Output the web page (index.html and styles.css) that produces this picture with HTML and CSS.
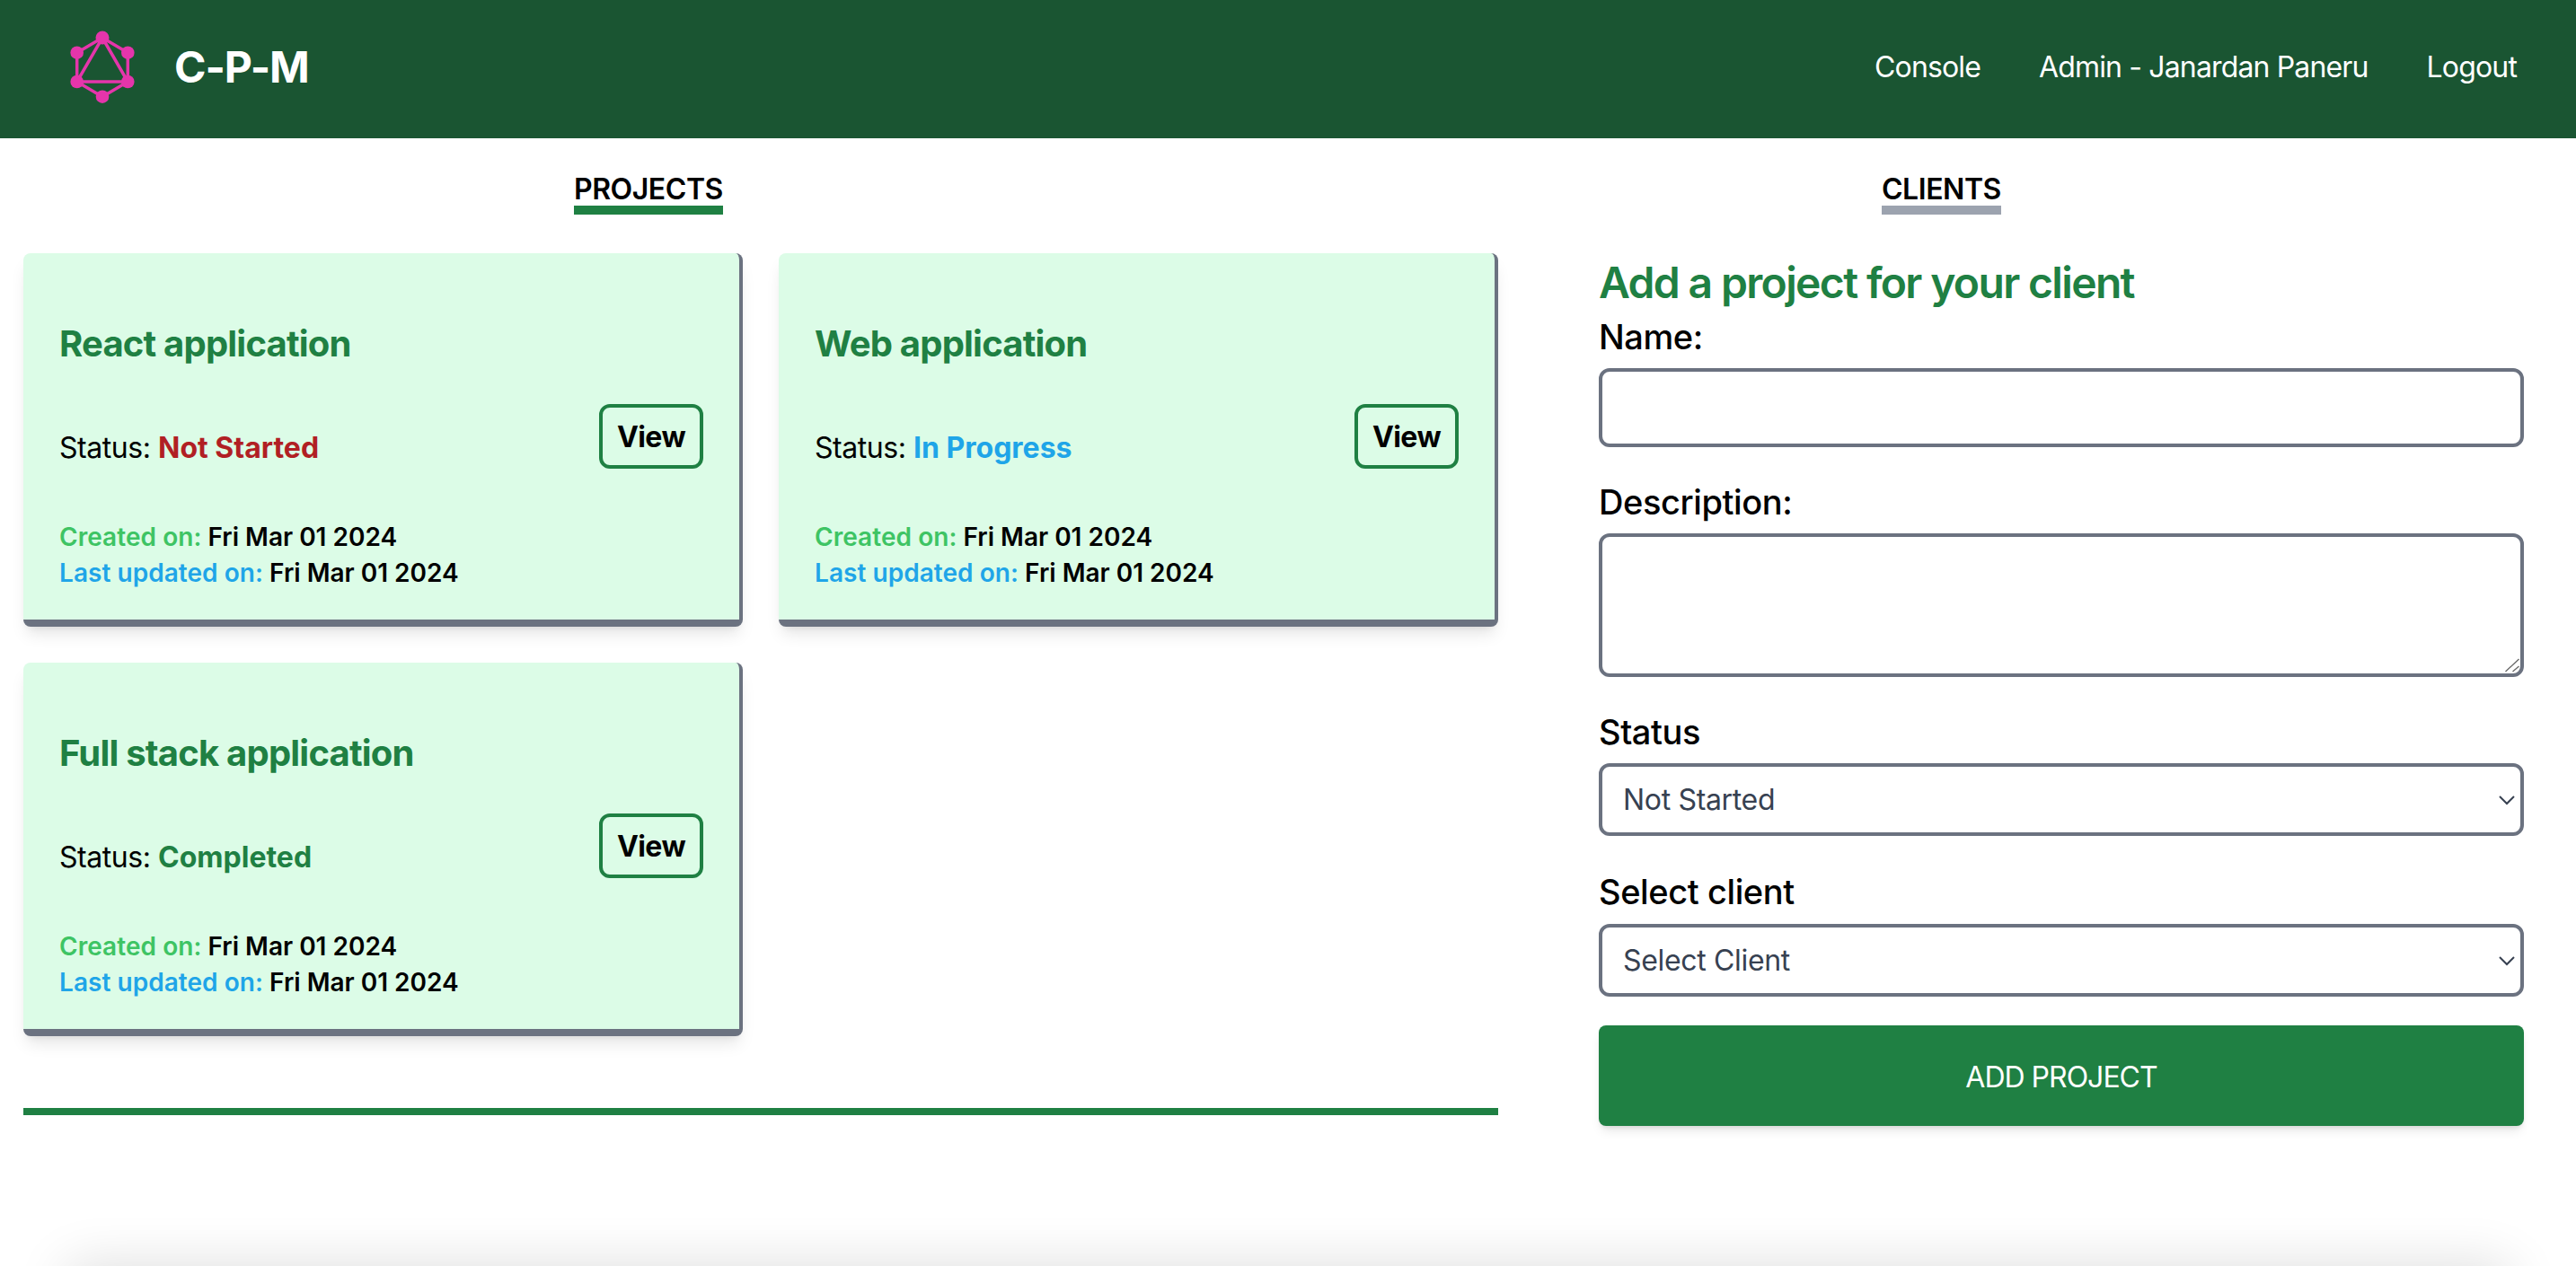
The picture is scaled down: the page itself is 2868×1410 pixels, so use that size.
FILE: index.html
```html
<!DOCTYPE html>
<html lang="en">
	<head>
		<meta charset="UTF-8">
		<title>C-P-M</title>
		<link rel="stylesheet" href="styles.css">
	</head>
	<body>

		<header class="topbar">
			<a class="brand" href="#">
				<svg class="brand-logo" viewBox="0 0 78 84" width="78" height="84">
					<g fill="none" stroke="#e535ab" stroke-width="3.5">
						<polygon points="39,9 67.3,25.7 67.3,58 39,74.7 10.7,58 10.7,25.7"></polygon>
						<polygon points="39,9 67.3,58 10.7,58"></polygon>
					</g>
					<g fill="#e535ab">
						<circle cx="39" cy="9" r="7.5"></circle>
						<circle cx="67.3" cy="25.7" r="7.3"></circle>
						<circle cx="67.3" cy="58" r="7.3"></circle>
						<circle cx="39" cy="74.7" r="7.3"></circle>
						<circle cx="10.7" cy="58" r="7.3"></circle>
						<circle cx="10.7" cy="25.7" r="7.3"></circle>
					</g>
				</svg>
				<span class="brand-name">C-P-M</span>
			</a>
			<nav class="topnav">
				<a href="#">Console</a>
				<a href="#">Admin - Janardan Paneru</a>
				<a href="#">Logout</a>
			</nav>
		</header>

		<div class="tabs">
			<button class="tab tab-active">PROJECTS</button>
			<button class="tab">CLIENTS</button>
		</div>

		<main class="content">
			<section>
				<div class="cards">
					<article class="card">
						<h2 class="card-title">React application</h2>
						<div class="card-row">
							<p>Status: <strong class="st-red">Not Started</strong></p>
							<a class="view-btn" href="#">View</a>
						</div>
						<div class="card-dates">
							<p><b class="lbl-created">Created on:</b> Fri Mar 01 2024</p>
							<p><b class="lbl-updated">Last updated on:</b> Fri Mar 01 2024</p>
						</div>
					</article>
					<article class="card">
						<h2 class="card-title">Web application</h2>
						<div class="card-row">
							<p>Status: <strong class="st-blue">In Progress</strong></p>
							<a class="view-btn" href="#">View</a>
						</div>
						<div class="card-dates">
							<p><b class="lbl-created">Created on:</b> Fri Mar 01 2024</p>
							<p><b class="lbl-updated">Last updated on:</b> Fri Mar 01 2024</p>
						</div>
					</article>
					<article class="card">
						<h2 class="card-title">Full stack application</h2>
						<div class="card-row">
							<p>Status: <strong class="st-green">Completed</strong></p>
							<a class="view-btn" href="#">View</a>
						</div>
						<div class="card-dates">
							<p><b class="lbl-created">Created on:</b> Fri Mar 01 2024</p>
							<p><b class="lbl-updated">Last updated on:</b> Fri Mar 01 2024</p>
						</div>
					</article>
				</div>
				<hr class="divider">
			</section>

			<form class="project-form">
				<h2 class="form-title">Add a project for your client</h2>
				<label class="field-label" for="name">Name:</label>
				<input class="field" id="name" type="text">

				<label class="field-label" for="desc">Description:</label>
				<div class="select-wrap">
					<textarea class="field field-area" id="desc"></textarea>
					<svg class="grip" viewBox="0 0 16 16" width="16" height="16">
						<path d="M.5 15L15.5 1M8.5 15l7-6" fill="none" stroke="#666" stroke-width="1.3"></path>
					</svg>
				</div>

				<label class="field-label" for="status">Status</label>
				<div class="select-wrap">
					<select class="field field-select" id="status">
						<option>Not Started</option>
						<option>In Progress</option>
						<option>Completed</option>
					</select>
					<svg class="chevron" viewBox="0 0 18 11" width="18" height="11">
						<path d="M1 1l8 8 8-8" fill="none" stroke="#374151" stroke-width="2"></path>
					</svg>
				</div>

				<label class="field-label label-client" for="client">Select client</label>
				<div class="select-wrap">
					<select class="field field-select" id="client">
						<option>Select Client</option>
					</select>
					<svg class="chevron" viewBox="0 0 18 11" width="18" height="11">
						<path d="M1 1l8 8 8-8" fill="none" stroke="#374151" stroke-width="2"></path>
					</svg>
				</div>

				<button class="submit-btn" type="button">ADD PROJECT</button>
			</form>
		</main>

		<footer class="page-foot"></footer>

	</body>
</html>
```

FILE: styles.css
```css
* {
	margin: 0;
	padding: 0;
	box-sizing: border-box;
}

html,
body {
	height: 100vh;
	overflow: hidden;
}

body {
	font-family: Inter, "Liberation Sans", sans-serif;
	font-size: 32px;
	color: #000;
	background: #fff;
}

a {
	color: inherit;
	text-decoration: none;
}

.topbar {
	height: 154px;
	padding: 0 66px 4px 75px;
	display: flex;
	align-items: center;
	justify-content: space-between;
	background: #1a5532;
	color: #fff;
}

.brand {
	display: flex;
	align-items: center;
	gap: 41px;
}

.brand-logo {
	display: block;
}

.brand-name {
	font-size: 48px;
	font-weight: 700;
	line-height: 60px;
	letter-spacing: -1.1px;
}

.topnav {
	display: flex;
	gap: 65px;
	line-height: 48px;
	letter-spacing: -.85px;
}

.tabs {
	height: 128px;
	padding: 36px 0 0 639px;
	display: flex;
	align-items: flex-start;
	gap: 1290px;
}

.tab {
	height: 49px;
	border: 0;
	border-bottom: 10px solid #9ca3af;
	background: none;
	font: 600 32px/41px Inter, sans-serif;
	letter-spacing: -.45px;
	color: #000;
}

.tab-active {
	border-bottom-color: #1f8043;
}

.content {
	height: 1128px;
	padding: 0 58px 0 26px;
	display: grid;
	grid-template-columns: 1642px 1fr;
	column-gap: 112px;
	align-items: start;
}

.cards {
	display: grid;
	grid-template-columns: repeat(2, 1fr);
	gap: 40px;
}

.card {
	height: 416px;
	padding: 73px 40px 32px;
	background: #dcfce7;
	border-right: 4px solid #6b7280;
	border-bottom: 8px solid #6b7280;
	border-radius: 8px;
	box-shadow: 0 12px 18px -4px rgba(0, 0, 0, .1), 0 6px 8px -6px rgba(0, 0, 0, .1);
}

.card-title {
	font-size: 40px;
	font-weight: 700;
	line-height: 56px;
	letter-spacing: -.8px;
	color: #1f8043;
}

.card-row {
	margin-top: 39px;
	display: flex;
	align-items: flex-end;
	justify-content: space-between;
}

.card-row p {
	line-height: 46px;
	letter-spacing: -.45px;
}

.card-row strong {
	font-weight: 700;
	letter-spacing: 0;
}

.st-red {
	color: #b11f24;
}

.st-blue {
	color: #1fa5e8;
}

.st-green {
	color: #1f8043;
}

.view-btn {
	width: 116px;
	height: 72px;
	border: 4px solid #1f8043;
	border-radius: 12px;
	font-weight: 700;
	line-height: 66px;
	letter-spacing: -.6px;
	text-align: center;
}

.card-dates {
	margin-top: 56px;
	font-size: 28px;
	font-weight: 600;
	line-height: 40px;
}

.card-dates b {
	font-weight: 600;
	letter-spacing: .05px;
}

.lbl-created {
	color: #3ec464;
}

.lbl-updated {
	color: #1fa5e8;
}

.divider {
	height: 8px;
	margin-top: 80px;
	border: 0;
	background: #1f8043;
}

.project-form {
	padding-top: 3px;
}

.form-title {
	font-size: 48px;
	font-weight: 600;
	line-height: 60px;
	letter-spacing: -1.65px;
	color: #1f8043;
}

.field-label {
	display: block;
	margin: 36px 0 10px;
	font-size: 38px;
	font-weight: 500;
	line-height: 50px;
	letter-spacing: -.4px;
}

.form-title + .field-label {
	margin-top: 5px;
}

.label-client {
	margin: 37px 0 11px;
}

.field {
	display: block;
	width: 100%;
	height: 88px;
	padding: 0 23px;
	border: 4px solid #6b7280;
	border-radius: 12px;
	background: #fff;
	font: 400 32px Inter, sans-serif;
	letter-spacing: -.33px;
	color: #374151;
	outline: none;
}

.field-area {
	height: 160px;
	resize: none;
}

.select-wrap {
	position: relative;
}

.field-select {
	height: 81px;
	appearance: none;
}

.chevron {
	position: absolute;
	right: 10px;
	top: 36px;
}

.grip {
	position: absolute;
	right: 5px;
	bottom: 5px;
}

.submit-btn {
	display: block;
	width: 100%;
	height: 112px;
	margin-top: 32px;
	padding-top: 2px;
	border: 0;
	border-radius: 8px;
	background: #1f8043;
	box-shadow: 0 8px 12px -3px rgba(0, 0, 0, .1), 0 3px 5px -2px rgba(0, 0, 0, .1);
	font: 400 32px Inter, sans-serif;
	letter-spacing: -1px;
	color: #fff;
}

.page-foot {
	height: 60px;
	margin: 0 75px;
	background: #fff;
	box-shadow: 0 0 60px rgba(0, 0, 0, .14);
}
```
